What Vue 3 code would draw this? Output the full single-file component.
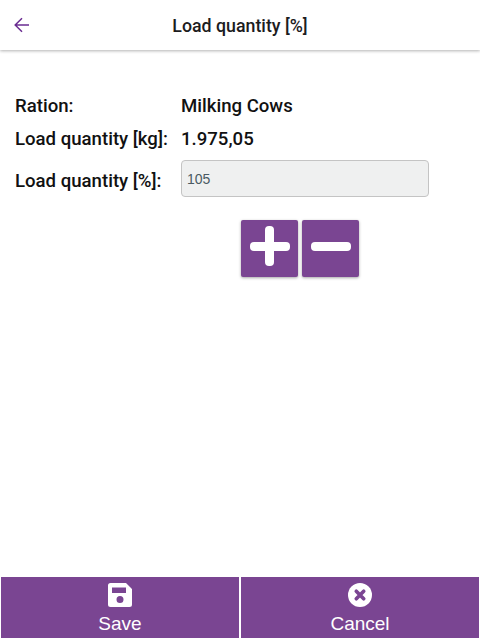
<script setup>
const rows = [
  { label: 'Ration:', value: 'Milking Cows' },
  { label: 'Load quantity [kg]:', value: '1.975,05' },
]
</script>

<template>
  <div class="page">
    <header class="topbar">
      <button class="back" aria-label="Back">
        <svg width="16" height="16" viewBox="0 0 16 16" fill="none" stroke="#6a2c91" stroke-width="1.5">
          <path d="M15 8H1.500M8 1.200 1.200 8 8 14.800" />
        </svg>
      </button>
      <h1 class="title">Load quantity [%]</h1>
    </header>

    <main class="content">
      <div v-for="r in rows" :key="r.label" class="row">
        <span class="label">{{ r.label }}</span>
        <span class="value">{{ r.value }}</span>
      </div>
      <div class="row input-row">
        <span class="label">Load quantity [%]:</span>
        <input class="field" value="105" readonly />
      </div>
      <div class="steppers">
        <button class="step" aria-label="Increase">
          <span class="bar"></span>
          <span class="bar vertical"></span>
        </button>
        <button class="step" aria-label="Decrease">
          <span class="bar"></span>
        </button>
      </div>
    </main>

    <footer class="actions">
      <button class="action">
        <svg width="24" height="24" viewBox="0 0 24 24">
          <path fill="#fff" fill-rule="evenodd" d="M2.500 0H18l6 6v15.500a2.500 2.500 0 0 1-2.500 2.500h-19A2.500 2.500 0 0 1 0 21.500v-19A2.500 2.500 0 0 1 2.500 0ZM4 4.500v5.500h14V4.500H4Zm8 8.500a3.500 3.500 0 1 0 0 7 3.500 3.500 0 0 0 0-7Z" />
        </svg>
        <span>Save</span>
      </button>
      <button class="action">
        <svg width="26" height="26" viewBox="0 0 26 26">
          <circle cx="13" cy="13" r="13" fill="#fff" />
          <path d="M9 9l8 8M17 9l-8 8" stroke="#7a4592" stroke-width="4" stroke-linecap="round" />
        </svg>
        <span>Cancel</span>
      </button>
    </footer>
  </div>
</template>

<style>
html, body { margin: 0; background: #fff; }
</style>

<style scoped>
.page {
  width: 480px;
  height: 640px;
  display: flex;
  flex-direction: column;
  font-family: Roboto, "Noto Sans", sans-serif;
  background: #fff;
  overflow: hidden;
}
.topbar {
  height: 50px;
  flex: none;
  display: flex;
  align-items: center;
  justify-content: center;
  position: relative;
  background: #fff;
  box-shadow: 0 1px 3px rgba(0, 0, 0, .3);
}
.back {
  position: absolute;
  left: 14px;
  top: 17px;
  padding: 0;
  border: 0;
  background: none;
  display: flex;
}
.title {
  margin: 0;
  font-size: 17.800px;
  font-weight: 500;
  color: #1c1c1e;
}
.content {
  flex: 1;
  padding: 39px 15px 0;
}
.row {
  display: flex;
  align-items: center;
  height: 33px;
  font-size: 18.600px;
  font-weight: 500;
  color: #111;
}
.label {
  width: 166px;
  flex: none;
}
.input-row {
  height: 37px;
  margin-top: 5px;
}
.input-row .label {
  padding-top: 4px;
}
.field {
  width: 248px;
  height: 37px;
  box-sizing: border-box;
  border: 1px solid #c4c4c4;
  border-radius: 4px;
  background: #eff0f0;
  padding: 0 5px;
  font-family: "Liberation Sans", sans-serif;
  font-size: 14px;
  color: #4a5a62;
  outline: none;
}
.steppers {
  display: flex;
  justify-content: center;
  gap: 4px;
  margin-top: 23px;
  padding-left: 120px;
}
.step {
  width: 57px;
  height: 57px;
  position: relative;
  padding: 0;
  border: 0;
  border-radius: 2px;
  background: #7a4592;
  box-shadow: 0 1px 3px rgba(0, 0, 0, .35);
}
.bar {
  position: absolute;
  left: 8.500px;
  top: 22px;
  width: 40px;
  height: 9px;
  border-radius: 4px;
  background: #fff;
}
.bar.vertical {
  left: 24px;
  top: 6px;
  width: 9px;
  height: 40px;
}
.actions {
  height: 61px;
  flex: none;
  display: flex;
  gap: 2px;
  padding: 0 1px;
  margin-bottom: 2px;
}
.action {
  flex: 1;
  display: flex;
  flex-direction: column;
  align-items: center;
  justify-content: flex-start;
  padding: 6px 0 0;
  border: 0;
  background: #7a4592;
  color: #fff;
  font-family: "Liberation Sans", sans-serif;
  font-size: 19px;
  line-height: 22px;
  gap: 6px;
}
.action svg { height: 24px; }
</style>
